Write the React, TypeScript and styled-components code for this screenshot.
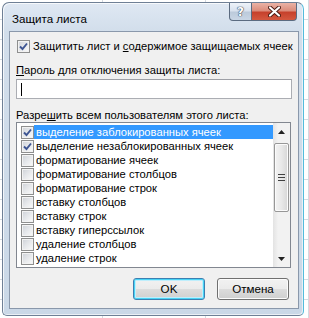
import React from "react";
import styled, {createGlobalStyle, css} from "styled-components";

const GlobalStyle = createGlobalStyle`
    html, body {
        margin: 0;
        padding: 0;
    }

    body {
        width: 309px;
        height: 318px;
        overflow: hidden;
        background-color: #ffffff;
        background-image: repeating-linear-gradient(90deg, transparent 0 102px, #d5d9e0 102px 103px),
        repeating-linear-gradient(180deg, transparent 0 19px, #d5d9e0 19px 20px);
        font-family: "Liberation Sans", Arial, sans-serif;
        font-size: 11.2px;
        color: #000;
    }
`;

const Window = styled.div`
    margin: 2px 0 0 2px;
    width: 302px;
    height: 314px;
    box-sizing: border-box;
    border: 1px solid #6f8096;
    border-right-color: #52bcdc;
    border-radius: 7px 7px 5px 5px;
    background: linear-gradient(180deg, #dfe8f3 0, #d2deeb 28px, #cad8e7 100%);
    box-shadow: inset 1px 1px 0 rgba(255, 255, 255, 0.75), inset -1px -1px 0 rgba(255, 255, 255, 0.6);
    padding: 0 4px 6px 6px;
    display: flex;
    flex-direction: column;
`;

const TitleBar = styled.div`
    height: 28px;
    display: flex;
    align-items: flex-start;
`;

const Title = styled.div`
    margin: 9px 0 0 3px;
    line-height: 14px;
    font-size: 11.6px;
`;

const CaptionButtons = styled.div`
    margin: 0 2px 0 auto;
    display: flex;
`;

const CaptionButton = styled.div<{ $close?: boolean }>`
    height: 18px;
    box-sizing: border-box;
    display: flex;
    align-items: center;
    justify-content: center;
    border: 1px solid #5b6b80;
    border-top: none;
    ${p => p.$close ? css`
        width: 45px;
        border-left: none;
        border-radius: 0 0 4px 0;
        background: linear-gradient(180deg, #eab3a6 0%, #dc8d7c 45%, #c6412c 55%, #d4583f 100%);
    ` : css`
        width: 23px;
        border-radius: 0 0 0 4px;
        background: linear-gradient(180deg, #eef3f9 0%, #d9e2ee 45%, #bccadb 55%, #c9d6e5 100%);
    `}
`;

const HelpGlyph = styled.span`
    font-family: "DejaVu Sans", sans-serif;
    font-weight: bold;
    font-size: 12px;
    line-height: 12px;
    color: #ffffff;
    text-shadow: 0 0 1px #33435a, 0 0 1px #33435a, 0 0 1px #33435a;
`;

const Client = styled.div`
    flex: 1;
    border: 1px solid #8a98ab;
    background: #f0f0f0;
    display: flex;
    flex-direction: column;
`;

const CheckRow = styled.label`
    margin: 8px 0 0 7px;
    height: 13px;
    display: flex;
    align-items: center;
    gap: 3px;
    line-height: 13px;
    white-space: nowrap;
`;

const Box = styled.span`
    width: 13px;
    height: 13px;
    box-sizing: border-box;
    flex: none;
    border: 1px solid #8e8f8f;
    background: linear-gradient(135deg, #cdd1d7 0%, #e6e8eb 50%, #fbfbfb 100%);
    box-shadow: inset 0 0 0 1px #f2f2f2;
    display: flex;
    align-items: center;
    justify-content: center;
`;

const FieldLabel = styled.div<{ $top: number }>`
    margin: ${p => p.$top}px 0 0 6px;
    line-height: 14px;
    height: 14px;
    white-space: nowrap;
`;

const Key = styled.span`
    text-decoration: underline;
    text-underline-offset: 1px;
`;

const PasswordInput = styled.div`
    margin: 2px 6px 0 6px;
    height: 20px;
    box-sizing: border-box;
    border: 1px solid #abadb3;
    border-top-color: #9ea0a6;
    background: #fff;
    display: flex;
    align-items: center;
    padding-left: 4px;
`;

const Caret = styled.span`
    width: 1px;
    height: 13px;
    background: #000;
`;

const ListBox = styled.div`
    margin: 0 7px 0 6px;
    height: 146px;
    box-sizing: border-box;
    border: 1px solid #828790;
    background: #fff;
    display: flex;
`;

const Rows = styled.div`
    flex: 1;
    padding-top: 2px;
    display: flex;
    flex-direction: column;
`;

const Row = styled.div`
    height: 14px;
    display: flex;
    align-items: center;
    padding-left: 4px;
`;

const RowText = styled.span<{ $selected?: boolean }>`
    flex: 1;
    height: 14px;
    line-height: 14px;
    padding-left: 2px;
    white-space: nowrap;
    ${p => p.$selected && css`
        background: #3399ff;
        color: #fff;
    `}
`;

const ScrollBar = styled.div`
    width: 17px;
    flex: none;
    background: linear-gradient(90deg, #e3e3e3 0%, #f2f2f2 30%, #f2f2f2 100%);
    display: flex;
    flex-direction: column;
    align-items: center;
`;

const Arrow = styled.div`
    width: 17px;
    height: 17px;
    display: flex;
    align-items: center;
    justify-content: center;
`;

const Thumb = styled.div`
    margin-top: 3px;
    width: 15px;
    height: 69px;
    box-sizing: border-box;
    border: 1px solid #979797;
    border-radius: 2px;
    background: linear-gradient(90deg, #f3f3f3 0%, #e8e8e8 50%, #d6d6d6 100%);
    box-shadow: inset 0 0 0 1px #fbfbfb;
    display: flex;
    align-items: center;
    justify-content: center;
`;

const Grip = styled.div`
    width: 7px;
    height: 7px;
    background: repeating-linear-gradient(180deg, #404040 0 1px, transparent 1px 3px);
`;

const Spacer = styled.div`
    flex: 1;
`;

const ButtonRow = styled.div`
    margin: 10px 9px 0 0;
    display: flex;
    justify-content: flex-end;
    gap: 12px;
`;

const Button = styled.button<{ $default?: boolean }>`
    width: 72px;
    height: 22px;
    box-sizing: border-box;
    padding: 0;
    border: 1px solid #707070;
    border-radius: 3px;
    background: linear-gradient(180deg, #f2f2f2 0%, #ebebeb 50%, #dddddd 50%, #cfcfcf 100%);
    box-shadow: inset 0 0 0 1px #fcfcfc;
    font-family: "Liberation Sans", Arial, sans-serif;
    font-size: 11.6px;
    line-height: 14px;
    color: #000;
    ${p => p.$default && css`
        border-color: #3c7fb1;
        box-shadow: inset 0 0 0 1px #48d3f5, inset 0 0 0 2px #bfeefc;
    `}
`;

function Check({checked}: { checked?: boolean }) {
    return (
        <Box>
            {checked && (
                <svg width="9" height="9" viewBox="0 0 9 9">
                    <path d="M1 4.5 L3.5 7 L8 1.5" fill="none" stroke="#3e5592" strokeWidth="1.9"/>
                </svg>
            )}
        </Box>
    );
}

const permissions = [
    {label: "выделение заблокированных ячеек", checked: true},
    {label: "выделение незаблокированных ячеек", checked: true},
    {label: "форматирование ячеек"},
    {label: "форматирование столбцов"},
    {label: "форматирование строк"},
    {label: "вставку столбцов"},
    {label: "вставку строк"},
    {label: "вставку гиперссылок"},
    {label: "удаление столбцов"},
    {label: "удаление строк"},
];

export default function App() {
    return (
        <>
            <GlobalStyle/>
            <Window>
                <TitleBar>
                    <Title>Защита листа</Title>
                    <CaptionButtons>
                        <CaptionButton>
                            <HelpGlyph>?</HelpGlyph>
                        </CaptionButton>
                        <CaptionButton $close>
                            <svg width="13" height="11" viewBox="0 0 13 11">
                                <path d="M2 1.5 L11 9.5 M11 1.5 L2 9.5" stroke="#4a1a12" strokeWidth="4" strokeLinecap="round"/>
                                <path d="M2 1.5 L11 9.5 M11 1.5 L2 9.5" stroke="#ffffff" strokeWidth="2.2" strokeLinecap="round"/>
                            </svg>
                        </CaptionButton>
                    </CaptionButtons>
                </TitleBar>
                <Client>
                    <CheckRow>
                        <Check checked/>
                        <span>Защитить лист и <Key>с</Key>одержимое защищаемых ячеек</span>
                    </CheckRow>
                    <FieldLabel $top={10}><Key>П</Key>ароль для отключения защиты листа:</FieldLabel>
                    <PasswordInput><Caret/></PasswordInput>
                    <FieldLabel $top={9}>Разре<Key>ш</Key>ить всем пользователям этого листа:</FieldLabel>
                    <ListBox>
                        <Rows>
                            {permissions.map((item, i) => (
                                <Row key={item.label}>
                                    <Check checked={item.checked}/>
                                    <RowText $selected={i === 0}>{item.label}</RowText>
                                </Row>
                            ))}
                        </Rows>
                        <ScrollBar>
                            <Arrow>
                                <svg width="7" height="4" viewBox="0 0 7 4"><path d="M0 4 L3.5 0 L7 4 Z" fill="#222"/></svg>
                            </Arrow>
                            <Thumb><Grip/></Thumb>
                            <Spacer/>
                            <Arrow>
                                <svg width="7" height="4" viewBox="0 0 7 4"><path d="M0 0 L3.5 4 L7 0 Z" fill="#222"/></svg>
                            </Arrow>
                        </ScrollBar>
                    </ListBox>
                    <ButtonRow>
                        <Button $default>OK</Button>
                        <Button>Отмена</Button>
                    </ButtonRow>
                </Client>
            </Window>
        </>
    );
}
